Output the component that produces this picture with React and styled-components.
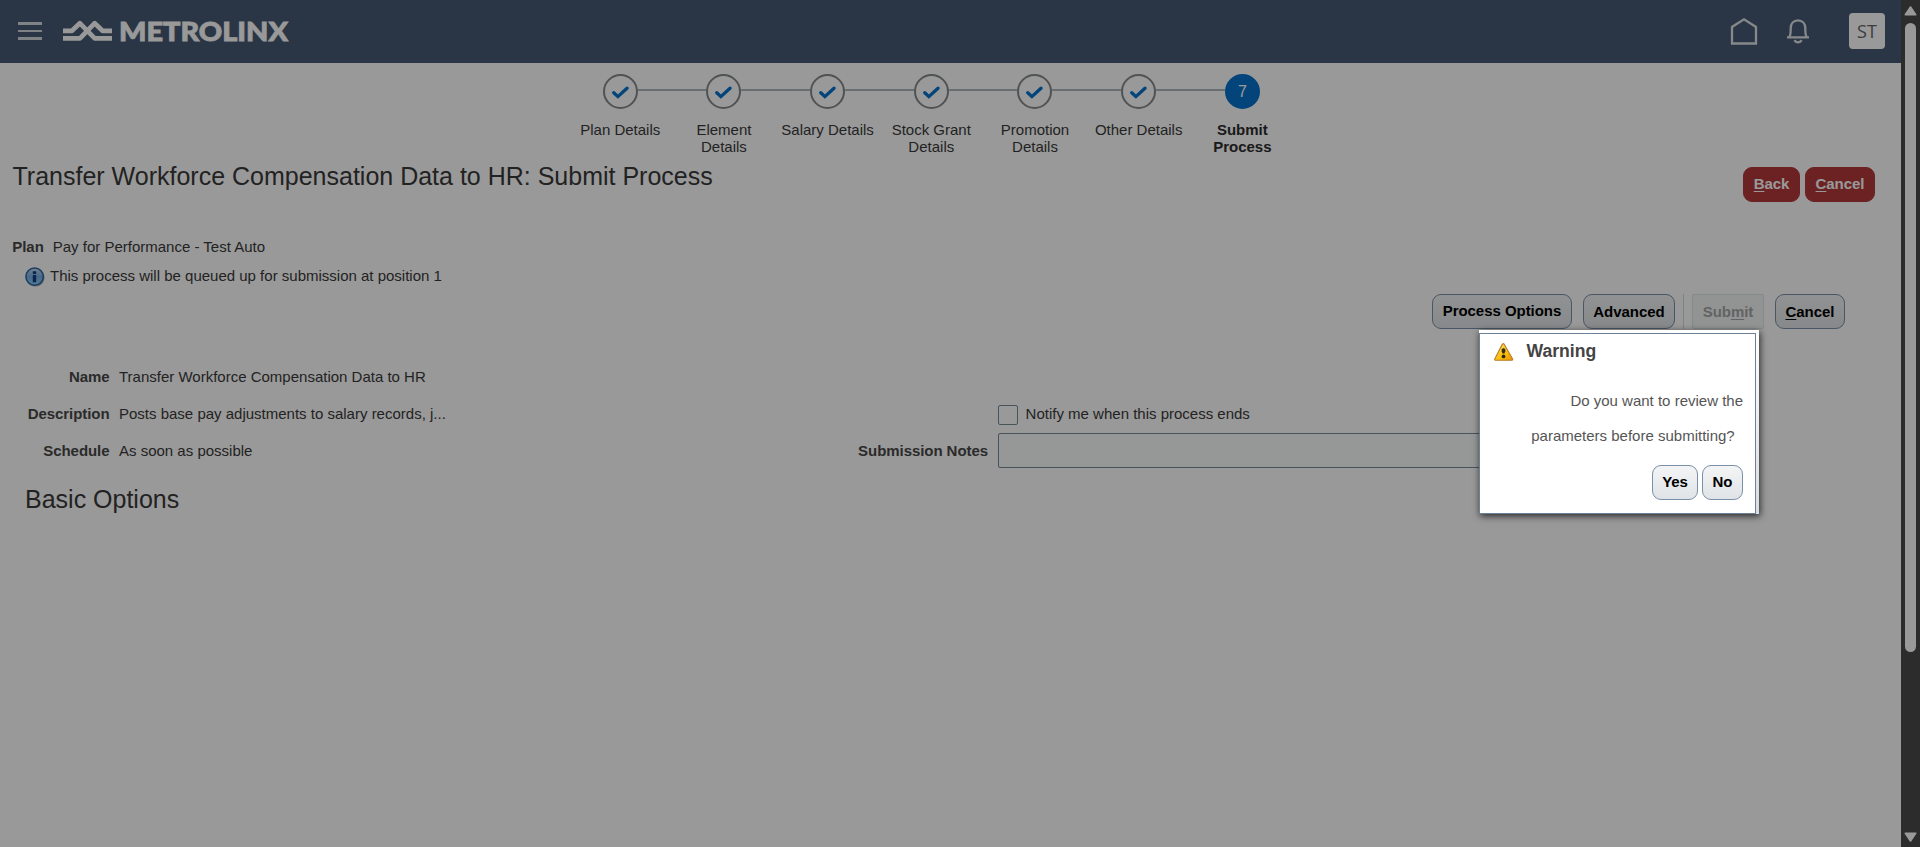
import React from "react";
import styled, { createGlobalStyle } from "styled-components";

const GlobalStyle = createGlobalStyle`
  *, *::before, *::after { box-sizing: border-box; }
  body {
    margin: 0;
    overflow: hidden;
    background: #fff;
    font: 15px/17px "Liberation Sans", Arial, sans-serif;
    color: #3a3a3a;
  }
`;

const Frame = styled.div`
  display: grid;
  grid-template-columns: minmax(0, 1fr) 19px;
  height: 847px;
`;

const Page = styled.div`
  display: flex;
  flex-direction: column;
`;

const Header = styled.header`
  display: flex;
  align-items: center;
  height: 63px;
  padding: 0 16px 1px 18px;
  background: #465a75;
`;

const MenuButton = styled.div`
  display: flex;
  flex-direction: column;
  gap: 5px;
  width: 24px;
  margin-right: 20px;
`;

const MenuBar = styled.span`
  height: 2.5px;
  background: #d5dae0;
`;

const Brand = styled.div`
  display: flex;
  align-items: center;
  gap: 6px;
  color: #fff;
  padding-bottom: 1px;

  svg { overflow: visible; }
`;

const HeaderActions = styled.div`
  display: flex;
  align-items: center;
  margin-left: auto;
`;

const HeaderIcon = styled.svg`
  width: 30px;
  height: 30px;
  margin-right: ${(p) => p.$gap}px;
  fill: none;
  stroke: #dfe3e7;
  stroke-width: 2.3;
`;

const Avatar = styled.div`
  display: flex;
  align-items: center;
  justify-content: center;
  width: 36px;
  height: 36px;
  padding-bottom: 1px;
  border-radius: 4px;
  background: #fff;
  color: #666;
  font: 18px/20px "Open Sans", sans-serif;
`;

const Train = styled.div`
  display: flex;
  align-self: flex-start;
  margin-left: 568.4px;
  padding-top: 11px;
  height: 92px;
`;

const Stop = styled.div`
  display: flex;
  flex-direction: column;
  align-items: center;
  gap: 12px;
  width: 103.7px;
`;

const Track = styled.div`
  display: flex;
  align-items: center;
  align-self: stretch;
`;

const Rail = styled.span`
  flex: 1;
  height: 2px;
  margin-bottom: 3px;
  background: ${(p) => (p.$hidden ? "transparent" : "#b0b8bb")};
`;

const Dot = styled.div`
  display: flex;
  align-items: center;
  justify-content: center;
  width: 35px;
  height: 35px;
  border-radius: 50%;
  border: 2px solid ${(p) => (p.$current ? "#0572ce" : "#85898c")};
  background: ${(p) => (p.$current ? "#0572ce" : "transparent")};
  color: #fff;
  font-size: 16px;
`;

const StopLabel = styled.div`
  width: 97px;
  text-align: center;
  font-weight: ${(p) => (p.$current ? "bold" : "normal")};
  color: ${(p) => (p.$current ? "#2c2c2c" : "#3a3a3a")};
`;

const TitleRow = styled.div`
  display: flex;
  justify-content: space-between;
  align-items: flex-start;
  height: 47px;
  padding: 0 26px 0 12.5px;
`;

const Title = styled.h1`
  margin: 7px 0 0;
  font-size: 25px;
  line-height: 28px;
  font-weight: normal;
`;

const Actions = styled.div`
  display: flex;
  gap: 5px;
  margin-top: 12px;
`;

const Button = styled.button`
  width: ${(p) => p.$width}px;
  height: 35px;
  padding: 0 0 ${(p) => p.$lift || 0}px;
  border: 1px solid #7890a8;
  border-radius: 9px;
  background: linear-gradient(#f3f4f5, #e0e4e7);
  color: #000;
  font: bold 15px/17px "Liberation Sans", Arial, sans-serif;
  letter-spacing: -0.04px;
  white-space: nowrap;
`;

const PrimaryButton = styled(Button)`
  border-color: #b5373a;
  background: #b5373a;
  color: #fff;
`;

const DisabledButton = styled(Button)`
  border-color: #dde5e6;
  border-radius: 2px;
  background: #f3f6f5;
  color: #a3a6a6;
`;

const Key = styled.span`
  text-decoration: underline;
  text-underline-offset: 2px;
  text-decoration-thickness: 1px;
`;

const PlanRow = styled.div`
  display: flex;
  gap: 9px;
  margin-top: 36px;
  padding-left: 12.3px;
`;

const FieldLabel = styled.span`
  font-weight: bold;
  letter-spacing: -0.06px;
  color: #484848;
`;

const InfoRow = styled.div`
  display: flex;
  gap: 5px;
  height: 20px;
  margin-top: 12px;
  padding-left: 25px;
`;

const Toolbar = styled.div`
  display: flex;
  justify-content: flex-end;
  margin-top: 7px;
  padding-right: 56px;
`;

const Gap = styled.span`
  width: ${(p) => p.$size}px;
`;

const Divider = styled.span`
  width: 1px;
  margin: 0 8px;
  background: #d6dade;
`;

const Form = styled.div`
  display: grid;
  grid-template-columns: 840px 1fr;
  margin-top: 39px;
`;

const Details = styled.div`
  display: grid;
  grid-template-columns: 109.5px 1fr;
  grid-auto-rows: 37px;
  column-gap: 9.5px;

  ${FieldLabel} { text-align: right; }
`;

const Notify = styled.div`
  display: grid;
  grid-template-columns: 148px 600px;
  grid-template-rows: 28px 35px;
  column-gap: 10px;
  padding-top: 37px;
`;

const NotifyCheck = styled.label`
  grid-column: 2;
  display: flex;
  align-items: flex-start;
  gap: 7.6px;
`;

const CheckBox = styled.span`
  width: 20px;
  height: 20px;
  border: 1px solid #788d96;
  border-radius: 2px;
`;

const NotesLabel = styled(FieldLabel)`
  align-self: center;
  text-align: right;
`;

const NotesInput = styled.div`
  height: 35px;
  border: 1px solid #788d96;
  border-radius: 2px;
  background: #fbfdfc;
`;

const SectionTitle = styled.h2`
  margin: 6px 0 0 25px;
  font-size: 25px;
  line-height: 28px;
  font-weight: normal;
`;

const ScrollBar = styled.div`
  display: flex;
  flex-direction: column;
  align-items: center;
  padding: 6px 0 5px;
  background: #4a4a4a;
`;

const ScrollThumb = styled.div`
  width: 11px;
  height: 629px;
  margin: 7px 0 auto;
  border-radius: 6px;
  background: #fff;
`;

const Backdrop = styled.div`
  position: fixed;
  inset: 0;
  background: rgba(0, 0, 0, 0.4);
`;

const DialogShell = styled.div`
  position: absolute;
  top: 330px;
  left: 1479px;
  width: 280px;
  height: 184px;
  padding: 3px 3px 0 0;
  background: linear-gradient(#ffffff, #d9dde1);
  box-shadow: 1px 2px 7px rgba(0, 0, 0, 0.75);
`;

const DialogBody = styled.div`
  height: 100%;
  padding: 9px 12px 0 14px;
  border: 1px solid #6b8199;
  background: #fff;
`;

const DialogHead = styled.div`
  display: flex;
  gap: 12.5px;
  height: 20px;
`;

const DialogTitle = styled.div`
  margin-top: -2px;
  font-size: 17.6px;
  line-height: 20px;
  font-weight: bold;
  color: #444;
`;

const DialogText = styled.div`
  margin-top: 20px;
  line-height: 35px;
  text-align: right;
  white-space: pre-line;
  color: #555;
`;

const DialogActions = styled.div`
  display: flex;
  justify-content: flex-end;
  gap: 4px;
  margin-top: 12px;
`;

const stops = [
  "Plan Details",
  "Element Details",
  "Salary Details",
  "Stock Grant Details",
  "Promotion Details",
  "Other Details",
  "Submit Process",
];

const CheckIcon = styled.svg`
  display: block;
  width: 17px;
  height: 13px;
  margin-top: 1px;
`;

const Check = () => (
  <CheckIcon viewBox="0 0 17 13">
    <path d="M1.8 6.7 5.9 10.6 15 2.2" fill="none" stroke="#0572ce" strokeWidth="3.3" strokeLinecap="round" />
  </CheckIcon>
);

const Logo = () => (
  <Brand>
    <svg width="51" height="22" viewBox="0 0 51 22" fill="none" stroke="currentColor" strokeWidth="4.7">
      <path d="M1 10.8H10L17.8 3.2 32.7 18.4H50" strokeLinejoin="round" />
      <path d="M1 18.4H18L32.7 3.2 40.5 10.8H50" strokeLinejoin="round" />
    </svg>
    <svg width="174" height="22" viewBox="0 0 174 22">
      <text x="0" y="20.6" textLength="169" lengthAdjust="spacingAndGlyphs" fill="currentColor" stroke="currentColor" strokeWidth="0.8" fontFamily="Lato, sans-serif" fontWeight="900" fontSize="26.8">
        METROLINX
      </text>
    </svg>
  </Brand>
);

const InfoIcon = () => (
  <svg width="20" height="20" viewBox="0 0 20 20">
    <defs>
      <linearGradient id="info" x1="0" y1="0" x2="0" y2="1">
        <stop offset="0" stopColor="#c4dcf0" />
        <stop offset="0.5" stopColor="#76b0e4" />
        <stop offset="1" stopColor="#8fd0f8" />
      </linearGradient>
    </defs>
    <circle cx="10.4" cy="10.4" r="9.2" fill="#68737c" opacity=".6" />
    <circle cx="9.6" cy="9.6" r="8.7" fill="url(#info)" stroke="#2c62a5" strokeWidth="1.5" />
    <path d="M7.8 4.3h3.4v2.6H7.8zM7.8 8h3.4v7.3H7.8z" fill="#143e86" />
  </svg>
);

const WarningIcon = () => (
  <svg width="20" height="19" viewBox="0 0 20 19">
    <defs>
      <linearGradient id="warn" x1="0" y1="0" x2="1" y2="1">
        <stop offset="0" stopColor="#ffe58a" />
        <stop offset="0.55" stopColor="#fdc20a" />
        <stop offset="1" stopColor="#e89400" />
      </linearGradient>
    </defs>
    <path d="M10 .9 18.6 15.9Q18.8 17.3 17.6 17.3H1.8Q.4 17.3.8 15.9L8.2 1.4Q9.1.2 10 .9Z" fill="url(#warn)" stroke="#b77d24" strokeWidth="1.1" />
    <path d="M7.7 6.2Q9.5 4.4 11.3 6.2V8.4L10.4 10.6H8.6L7.7 8.4Z" fill="#33291a" />
    <circle cx="9.5" cy="13.4" r="1.9" fill="#33291a" />
  </svg>
);

export default function App() {
  return (
    <>
      <GlobalStyle />
      <Frame>
        <Page>
          <Header>
            <MenuButton>
              <MenuBar />
              <MenuBar />
              <MenuBar />
            </MenuButton>
            <Logo />
            <HeaderActions>
              <HeaderIcon $gap={24} viewBox="0 0 30 30">
                <path d="M3 27.5V11L15 3.3 27 11V27.5Z" />
              </HeaderIcon>
              <HeaderIcon $gap={36} viewBox="0 0 30 30">
                <path d="M4 21.3H26M6.2 21.3C7.9 18.8 7.7 16 7.7 12.2 7.7 7.5 10.7 4.4 15 4.4S22.3 7.5 22.3 12.2C22.3 16 22.1 18.8 23.8 21.3" />
                <path d="M11.2 24.2Q15 28.5 18.8 24.2" />
              </HeaderIcon>
              <Avatar>ST</Avatar>
            </HeaderActions>
          </Header>

          <Train>
            {stops.map((name, i) => {
              const current = i === stops.length - 1;
              return (
                <Stop key={name}>
                  <Track>
                    <Rail $hidden={i === 0} />
                    <Dot $current={current}>{current ? i + 1 : <Check />}</Dot>
                    <Rail $hidden={current} />
                  </Track>
                  <StopLabel $current={current}>{name}</StopLabel>
                </Stop>
              );
            })}
          </Train>

          <TitleRow>
            <Title>Transfer Workforce Compensation Data to HR: Submit Process</Title>
            <Actions>
              <PrimaryButton $width={57} $lift={2}><Key>B</Key>ack</PrimaryButton>
              <PrimaryButton $width={70} $lift={2}><Key>C</Key>ancel</PrimaryButton>
            </Actions>
          </TitleRow>

          <PlanRow>
            <FieldLabel>Plan</FieldLabel>
            <span>Pay for Performance - Test Auto</span>
          </PlanRow>
          <InfoRow>
            <InfoIcon />
            <span>This process will be queued up for submission at position 1</span>
          </InfoRow>

          <Toolbar>
            <Button $width={140} $lift={2}>Process Options</Button>
            <Gap $size={11} />
            <Button $width={92}>Advanced</Button>
            <Divider />
            <DisabledButton $width={72}>Sub<Key>m</Key>it</DisabledButton>
            <Gap $size={11} />
            <Button $width={70}><Key>C</Key>ancel</Button>
          </Toolbar>

          <Form>
            <Details>
              <FieldLabel>Name</FieldLabel>
              <span>Transfer Workforce Compensation Data to HR</span>
              <FieldLabel>Description</FieldLabel>
              <span>Posts base pay adjustments to salary records, j...</span>
              <FieldLabel>Schedule</FieldLabel>
              <span>As soon as possible</span>
            </Details>
            <Notify>
              <NotifyCheck>
                <CheckBox />
                Notify me when this process ends
              </NotifyCheck>
              <NotesLabel>Submission Notes</NotesLabel>
              <NotesInput />
            </Notify>
          </Form>

          <SectionTitle>Basic Options</SectionTitle>
        </Page>

        <ScrollBar>
          <svg width="13" height="10" viewBox="0 0 13 10">
            <path d="M6.5 1 11.7 8.8H1.3Z" fill="#fff" stroke="#fff" strokeWidth="1.6" strokeLinejoin="round" />
          </svg>
          <ScrollThumb />
          <svg width="13" height="10" viewBox="0 0 13 10">
            <path d="M6.5 9 11.7 1.2H1.3Z" fill="#fff" stroke="#fff" strokeWidth="1.6" strokeLinejoin="round" />
          </svg>
        </ScrollBar>
      </Frame>

      <Backdrop />

      <DialogShell>
        <DialogBody>
          <DialogHead>
            <WarningIcon />
            <DialogTitle>Warning</DialogTitle>
          </DialogHead>
          <DialogText>{"Do you want to review the\nparameters before submitting?\u00a0\u00a0"}</DialogText>
          <DialogActions>
            <Button $width={46} $lift={2}>Yes</Button>
            <Button $width={41} $lift={2}>No</Button>
          </DialogActions>
        </DialogBody>
      </DialogShell>
    </>
  );
}
